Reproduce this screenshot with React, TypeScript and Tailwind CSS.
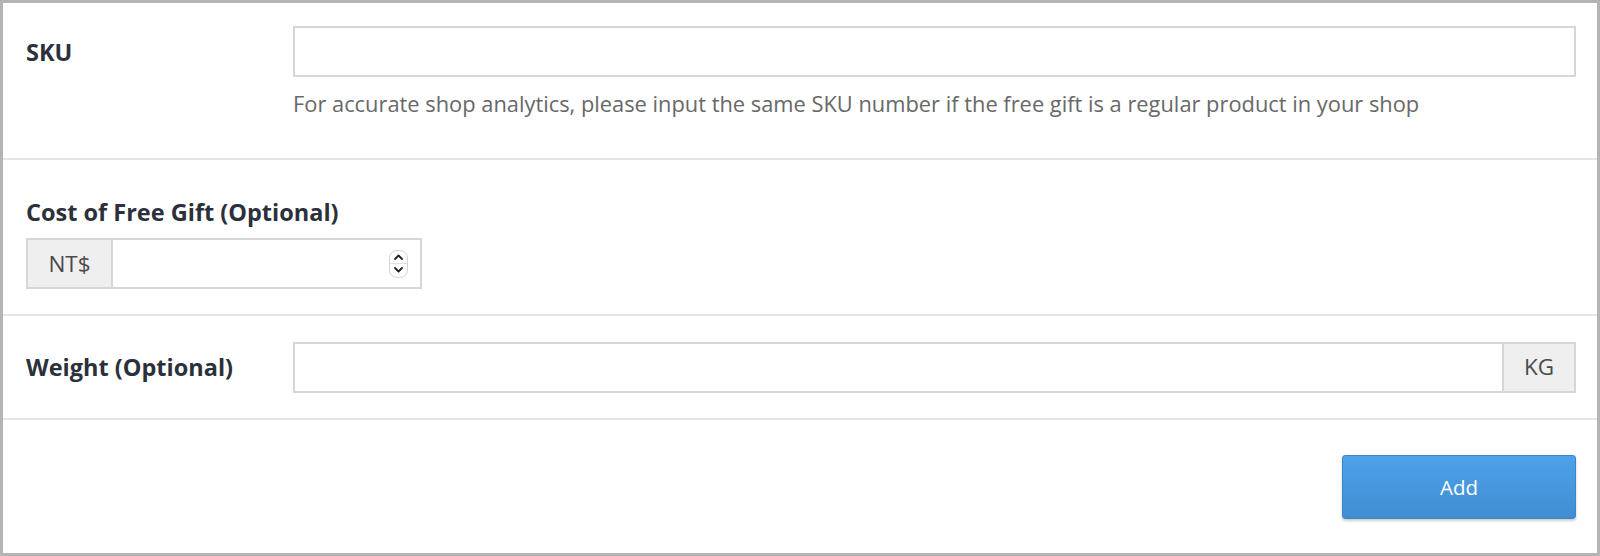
import React from 'react'

const font = { fontFamily: '"Open Sans", "Noto Sans", sans-serif' }

// ── Stepper arrows drawn over the number field ───────────────────────────────
function Stepper() {
  return (
    <div className="absolute right-[12px] top-1/2 -translate-y-1/2 w-[19px] h-[28px] rounded-[8px] border border-[#d4d4d4] bg-white flex flex-col">
      <div className="flex-1 flex items-center justify-center border-b border-[#e2e2e2]">
        <svg width="9" height="6" viewBox="0 0 9 6" fill="none">
          <path d="M1 5 L4.5 1.5 L8 5" stroke="#222" strokeWidth="1.8" strokeLinecap="round" strokeLinejoin="round" />
        </svg>
      </div>
      <div className="flex-1 flex items-center justify-center">
        <svg width="9" height="6" viewBox="0 0 9 6" fill="none">
          <path d="M1 1 L4.5 4.5 L8 1" stroke="#222" strokeWidth="1.8" strokeLinecap="round" strokeLinejoin="round" />
        </svg>
      </div>
    </div>
  )
}

export default function App() {
  return (
    <div className="w-[1600px] h-[556px] bg-white border-[3px] border-[#b4b4b4] flex flex-col" style={font}>

      {/* SKU */}
      <div className="flex pl-[23px] pr-[21px] pt-[23px] h-[157px] border-b-2 border-[#e4e4e4]">
        <div className="w-[267px] h-[51px] pt-[2px] flex items-center text-[23.5px] font-bold text-[#2b303b]">SKU</div>
        <div className="flex-1">
          <input className="w-full h-[51px] border-2 border-[#d6d6d6] outline-none px-3 text-[20px]" />
          <p className="mt-[12px] text-[21.85px] text-[#686868] leading-[30px]">
            For accurate shop analytics, please input the same SKU number if the free gift is a regular product in your shop
          </p>
        </div>
      </div>

      {/* Cost */}
      <div className="pl-[23px] pr-[21px] pt-[37px] h-[156px] border-b-2 border-[#e4e4e4]">
        <div className="text-[23.5px] font-bold text-[#2b303b] leading-[30px]">Cost of Free Gift (Optional)</div>
        <div className="mt-[11px] flex w-[396px] h-[51px] border-2 border-[#d6d6d6]">
          <div className="w-[85px] flex items-center justify-center bg-[#efefef] border-r-2 border-[#d6d6d6] text-[22.5px] text-[#4a4a4a]">NT$</div>
          <div className="relative flex-1">
            <input className="w-full h-full outline-none px-3 text-[20px]" />
            <Stepper />
          </div>
        </div>
      </div>

      {/* Weight */}
      <div className="flex items-center pl-[23px] pr-[21px] h-[104px] border-b-2 border-[#e4e4e4]">
        <div className="w-[267px] pt-[1px] text-[23.5px] font-bold text-[#2b303b]">Weight (Optional)</div>
        <div className="flex-1 flex h-[51px] border-2 border-[#d6d6d6]">
          <input className="flex-1 outline-none px-3 text-[20px]" />
          <div className="w-[72px] flex items-center justify-center bg-[#efefef] border-l-2 border-[#d6d6d6] text-[22.5px] text-[#4a4a4a]">KG</div>
        </div>
      </div>

      {/* Footer */}
      <div className="flex-1 flex justify-end items-start pr-[21px] pt-[35px]">
        <button className="w-[234px] h-[64px] rounded-[3px] border border-[#3b86c9] bg-gradient-to-b from-[#4ea2ea] to-[#408dd2] text-white text-[20.5px] shadow-[0_2px_3px_rgba(0,0,0,0.2)]">
          Add
        </button>
      </div>
    </div>
  )
}
